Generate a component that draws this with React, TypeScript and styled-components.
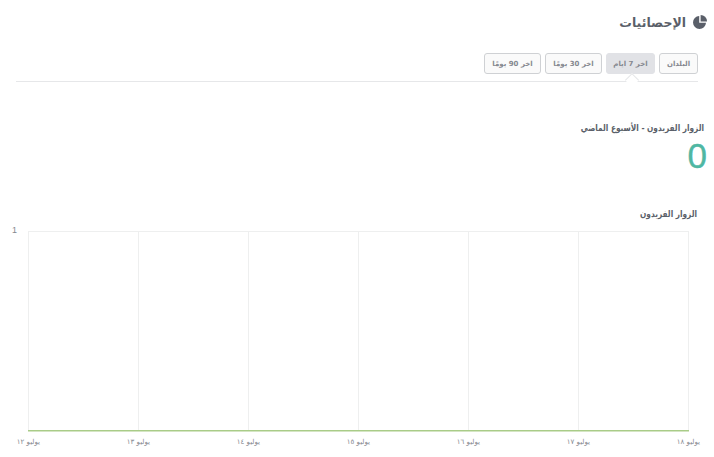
import React from "react";
import styled, { createGlobalStyle } from "styled-components";

const Global = createGlobalStyle`
  html, body { margin: 0; padding: 0; background: #fff; }
  body { font-family: "DejaVu Sans", "Noto Sans", sans-serif; width: 714px; height: 457px; overflow: hidden; }
`;
const Page = styled.div`
  direction: rtl;
  width: 714px;
  height: 457px;
  display: flex;
  flex-direction: column;
  overflow: hidden;
`;
const Header = styled.header`
  display: flex;
  align-items: center;
  gap: 7px;
  height: 14px;
  margin: 15px 7px 0 0;
`;
const Title = styled.h1`
  margin: 1px 0 0;
  font-size: 12.5px;
  font-weight: 700;
  color: #5a5f69;
  line-height: 14px;
`;
const Tabs = styled.nav`
  display: flex;
  gap: 4px;
  height: 28px;
  margin: 24px 16px 0 16px;
  border-bottom: 1px solid #e6e7e9;
  position: relative;
`;
const Tab = styled.button<{ $active?: boolean; $w: number }>`
  width: ${(p) => p.$w}px;
  height: 21px;
  padding: 0;
  box-sizing: border-box;
  border-radius: 3px;
  font-family: inherit;
  font-size: 7px;
  font-weight: 700;
  color: #85888f;
  direction: rtl;
  border: 1px solid ${(p) => (p.$active ? "#e1e2e6" : "#cfd1d4")};
  background: ${(p) => (p.$active ? "#e1e2e6" : "#fafafa")};
`;
const Caret = styled.span`
  position: absolute;
  right: 61px;
  top: 22px;
  width: 9px;
  height: 9px;
  background: #fff;
  border-top: 1px solid #e6e7e9;
  border-left: 1px solid #e6e7e9;
  transform: rotate(45deg);
`;
const StatLabel = styled.div`
  margin: 39px 10px 0 0;
  font-size: 9px;
  font-weight: 700;
  line-height: 14px;
  color: #5a5f69;
  transform: scaleX(0.82);
  transform-origin: right center;
`;
const StatValue = styled.div`
  margin: 3px 7px 0 0;
  font-family: "Liberation Sans", sans-serif;
  font-size: 35px;
  line-height: 36px;
  color: #4fb7a3;
  -webkit-text-stroke: 0.4px #4fb7a3;
`;
const ChartTitle = styled.div`
  margin: 33px 17px 0 0;
  font-size: 9px;
  font-weight: 700;
  line-height: 14px;
  color: #5a5f69;
  transform: scaleX(0.82);
  transform-origin: right center;
`;
const ChartSvg = styled.svg`
  display: block;
  margin-top: 0;
  flex: none;
`;
const AxisText = styled.text`
  font-family: "DejaVu Sans", sans-serif;
  font-size: 7px;
  fill: #85888f;
`;
const AxisValue = styled.text`
  font-family: "Liberation Sans", sans-serif;
  font-size: 9px;
  fill: #85888f;
`;

const PieIcon = () => (
  <svg width="14" height="14" viewBox="0 0 14 14" aria-hidden="true">
    <path d="M6.2 1A6.5 6.5 0 1 0 13 7.8H6.2Z" fill="#5a5f69" />
    <path d="M7.6 0A6.4 6.4 0 0 1 14 6.4H7.6Z" fill="#5a5f69" />
  </svg>
);

const days = ["يوليو ١٢", "يوليو ١٣", "يوليو ١٤", "يوليو ١٥", "يوليو ١٦", "يوليو ١٧", "يوليو ١٨"];
const xs = [28.5, 138.5, 248.5, 358.5, 468.5, 578.5, 688.5];
const tabs = [
  { label: "البلدان", w: 39 },
  { label: "اخر 7 ايام", w: 49, active: true },
  { label: "اخر 30 يومًا", w: 57 },
  { label: "اخر 90 يومًا", w: 57 },
];

export default function App() {
  return (
    <Page>
      <Global />
      <Header>
        <PieIcon />
        <Title>الإحصائيات</Title>
      </Header>
      <Tabs>
        {tabs.map((t) => (
          <Tab key={t.label} $w={t.w} $active={t.active}>{t.label}</Tab>
        ))}
        <Caret />
      </Tabs>
      <StatLabel>الزوار الفريدون - الأسبوع الماضي</StatLabel>
      <StatValue>0</StatValue>
      <ChartTitle>الزوار الفريدون</ChartTitle>
      <ChartSvg width="714" height="225" viewBox="0 222 714 225">
        <line x1="28" x2="689" y1="232.5" y2="232.5" stroke="#eeefef" />
        {xs.map((x) => (
          <line key={x} x1={x} x2={x} y1="232" y2="432" stroke="#eeefef" />
        ))}
        <line x1="28" x2="689" y1="431.75" y2="431.75" stroke="#a9cc88" strokeWidth="1.5" />
        <AxisValue x="17" y="234">1</AxisValue>
        {days.map((d, i) => (
          <AxisText key={d} x={xs[i] + 11.5} y="445" textAnchor="start" direction="rtl">{d}</AxisText>
        ))}
      </ChartSvg>
    </Page>
  );
}
